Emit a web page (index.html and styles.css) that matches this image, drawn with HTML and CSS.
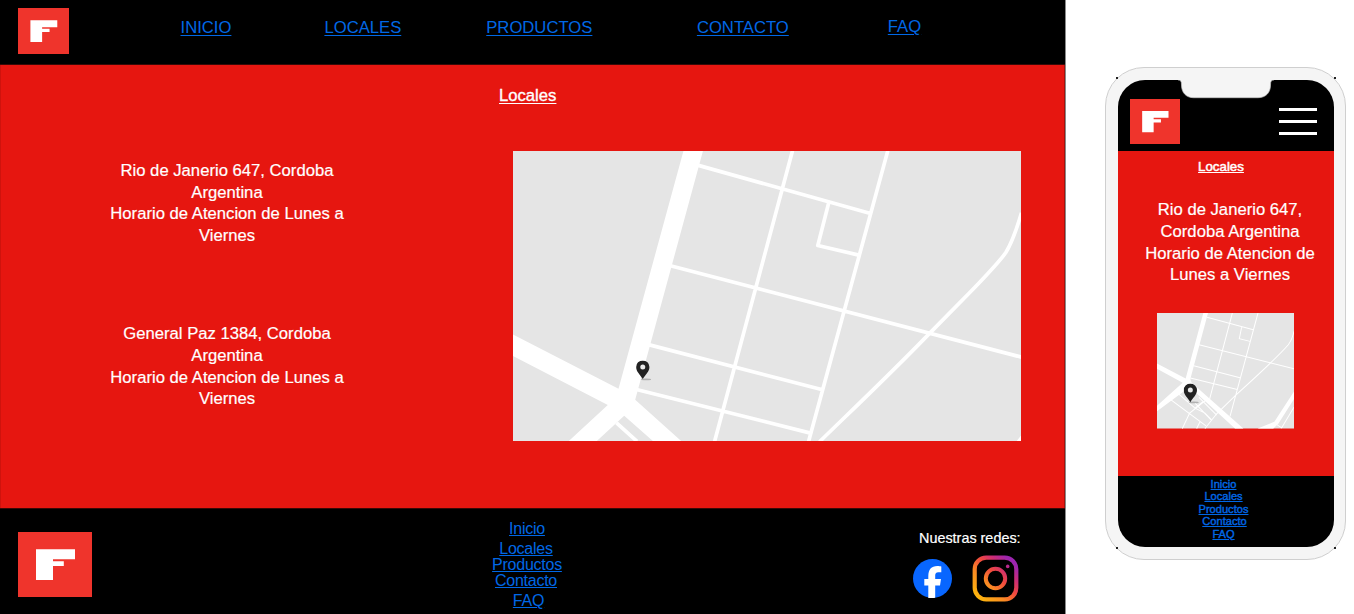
FILE: index.html
```html
<!DOCTYPE html>
<html lang="es">
<head>
<meta charset="utf-8">
<title>Locales</title>
<link rel="stylesheet" href="styles.css">
</head>
<body>
<svg class="defs" width="0" height="0" aria-hidden="true">
  <symbol id="logo" viewBox="0 0 74 65" preserveAspectRatio="none">
    <rect width="74" height="65" fill="#ef342c"/>
    <path fill="#fff" d="M18 17.3H57V27.2H35V29.2H45.8V34H35V48H18z"/>
  </symbol>
  <symbol id="pin" viewBox="0 0 48 60">
    <ellipse cx="30" cy="57" rx="15" ry="3" fill="#000" opacity=".22"/>
    <path fill="#222" d="M20 0A20 20 0 0 0 0 20C0 34 12 43 20 56C28 43 40 34 40 20A20 20 0 0 0 20 0z"/>
    <circle cx="20" cy="20" r="7.5" fill="#e9e9e9"/>
  </symbol>
</svg>
<div class="board">
  <div class="desktop">
    <header class="topbar">
      <svg class="logo-top"><use href="#logo"/></svg>
      <nav class="menu">
        <a href="#">INICIO</a>
        <a href="#">LOCALES</a>
        <a href="#">PRODUCTOS</a>
        <a href="#">CONTACTO</a>
        <a href="#" class="menu-faq">FAQ</a>
      </nav>
    </header>
    <main class="content">
      <h1 class="title">Locales</h1>
      <div class="columns">
        <div class="addresses">
          <p>Rio de Janerio 647, Cordoba<br>Argentina<br>Horario de Atencion de Lunes a<br>Viernes</p>
          <p>General Paz 1384, Cordoba<br>Argentina<br>Horario de Atencion de Lunes a<br>Viernes</p>
        </div>
        <svg class="map" viewBox="512.5 151.2 508.5 290">
          <rect x="512" y="151" width="510" height="291" fill="#e5e5e5"/>
          <path fill="#fff" d="M683 151H702.5L634.7 400L681 441.5H652.7L623.7 416L596 441.5H568L607.3 405.3L512 356V334.5L618 389zM1016 441.5L1021 435V441.5z"/>
          <g fill="none" stroke="#fff" stroke-width="3.7">
            <path d="M697 165.3L870 213.7M669 265.7L1022 357.6M648 344.8L822 390M635 389.5L810 433.3M792 151L714 442M887.3 151L808 442M616 423L636.5 441.5"/>
            <path d="M828.3 202.7L817.3 245.7L858.3 255.3" stroke-linejoin="round"/>
            <path d="M819 442C855 407 890 374 929.3 333.3L972 290Q999 262 1005.500 252.500Q1013 240 1021 213"/>
          </g>
          <use href="#pin" x="635.6" y="360.6" width="16" height="20"/>
        </svg>
      </div>
    </main>
    <footer class="bottom">
      <svg class="logo-bottom"><use href="#logo"/></svg>
      <nav class="links">
        <a href="#">Inicio</a>
        <a href="#" class="nudge-left">Locales</a>
        <a href="#">Productos</a>
        <a href="#" class="nudge-left">Contacto</a>
        <a href="#">FAQ</a>
      </nav>
      <div class="social">
        <span>Nuestras redes:</span>
        <div class="networks">
          <svg width="39" height="39" viewBox="0 0 39 39">
            <circle cx="19.5" cy="19.5" r="19.5" fill="#0866ff"/>
            <path fill="#fff" d="M15.300 39V26.500H11.300V20H15.300V17C15.300 10.500 18.300 7 24.300 7C26 7 27.500 7.200 28.300 7.500V13.200H25.300C22.900 13.200 22.200 14.400 22.200 16.800V20H28L27 26.500H22.200V38.800Q18.500 39.400 15.300 39z"/>
          </svg>
          <svg width="47" height="47" viewBox="0 0 47 47">
            <defs><linearGradient id="ig" x1="0" y1="47" x2="47" y2="0" gradientUnits="userSpaceOnUse">
              <stop offset=".1" stop-color="#fcb60c"/><stop offset=".35" stop-color="#fb8d22"/><stop offset=".55" stop-color="#f0483f"/><stop offset=".7" stop-color="#cb2c77"/><stop offset=".85" stop-color="#9c25b0"/>
            </linearGradient></defs>
            <rect x="2.700" y="2.700" width="41.600" height="41.600" rx="11.500" fill="none" stroke="url(#ig)" stroke-width="4.200"/>
            <circle cx="23.500" cy="23.500" r="9.700" fill="none" stroke="url(#ig)" stroke-width="4"/>
            <circle cx="35.700" cy="11.400" r="1.800" fill="url(#ig)"/>
          </svg>
        </div>
      </div>
    </footer>
  </div>

  <div class="phone">
    <i class="dot tl"></i><i class="dot tr"></i><i class="dot bl"></i><i class="dot br"></i>
    <div class="screen">
      <svg class="notch" width="96" height="19" viewBox="0 0 96 19"><path fill="#f5f5f5" stroke="#c8c8c8" stroke-width=".7" d="M0 0C3 0 3.500 1.500 3.500 5C3.500 13 8.500 17.700 15.500 17.700H80C87.500 17.700 92.500 13 92.500 5C92.500 1.500 93 0 96 0V-2H0z"/></svg>
      <header class="phone-top">
        <svg class="logo-phone"><use href="#logo"/></svg>
        <div class="burger"><i></i><i></i><i></i></div>
      </header>
      <main class="phone-main">
        <h2>Locales</h2>
        <p>Rio de Janerio 647,<br>Cordoba Argentina<br>Horario de Atencion de<br>Lunes a Viernes</p>
        <svg class="phone-map" viewBox="36 40 411 346" preserveAspectRatio="none">
          <rect x="36" y="40" width="411" height="346" fill="#e5e5e5"/>
          <path fill="#fff" d="M175 40H189L136 238L140 249L295 386H270L134 262L36 334V318L113 249L36 207V191L122 236zM447 275L388 366L338 386H385L400 372L447 298z"/>
          <g fill="none" stroke="#fff" stroke-width="3">
            <path d="M186 53L325 90M162 135L447 207M146 198L285 234M136 235L277 269M262 40L194 297M339 40L255 350M290 82L283 117L315 125M447 95Q442 119 430 135C400 169 320 243 270 288L215 342L180 386"/>
            <path d="M78 300L183 378M98 280L150 325L180 340L200 360M150 310L198 360M162 293L215 346M112 386L134 340L182 302M155 386L165 366M447 322L410 384L392 372M150 325L175 305"/>
          </g>
          <use href="#pin" x="116" y="251" width="48" height="60"/>
        </svg>
      </main>
      <nav class="phone-links">
        <a href="#">Inicio</a>
        <a href="#">Locales</a>
        <a href="#">Productos</a>
        <a href="#" class="phone-nudge">Contacto</a>
        <a href="#">FAQ</a>
      </nav>
    </div>
  </div>
</div>
</body>
</html>
```
FILE: styles.css
```css
* { box-sizing: border-box; }
body {
  margin: 0;
  background: #fff;
  font-family: "Liberation Sans", Arial, sans-serif;
  font-size: 16.67px;
  overflow: hidden;
}
.defs { position: absolute; }
svg { display: block; flex: none; }
a { color: #0068e6; text-decoration: underline; text-underline-offset: 2px; }
h1, h2, p { margin: 0; font-weight: normal; }

.board { display: flex; width: 1354px; height: 614px; }
.desktop { width: 1066px; height: 614px; display: flex; flex-direction: column; border-right: 1px solid #8a8a8a; }

.topbar { height: 65px; background: #000; border-bottom: 1px solid #3a0806; display: flex; align-items: flex-start; padding: 8px 0 0 18px; }
.logo-top { width: 51px; height: 46px; }
.menu { display: flex; line-height: 20px; padding-top: 10px; }
.menu a { margin-left: 93px; }
.menu a:nth-child(1) { margin-left: 111.5px; }
.menu a:nth-child(3) { margin-left: 85px; }
.menu a:nth-child(4) { margin-left: 104.500px; }
.menu .menu-faq { margin-left: 99px; margin-top: -1px; }

.content { height: 443px; background: #e61610; color: #fff; border-left: 1px solid #cf130d; border-right: 1px solid #a5110c; display: flex; flex-direction: column; }
.title { font-size: 16.67px; line-height: 22px; padding: 20px 0 0 498px; text-decoration: underline; text-underline-offset: 2px; -webkit-text-stroke: .35px #fff; }
.columns { display: flex; align-items: flex-start; padding: 44.200px 0 0 86px; }
.addresses { width: 280px; margin-right: 145.500px; padding-top: 8.700px; line-height: 21.670px; text-align: center; display: flex; flex-direction: column; gap: 76.600px; -webkit-text-stroke: .2px #fff; }
.map { width: 508.500px; height: 290px; }

.bottom { height: 106px; background: #000; border-top: 1px solid #3a0806; display: flex; align-items: flex-start; }
.logo-bottom { width: 74px; height: 65px; margin: 23px 0 0 18px; }
.links { width: 120px; margin-left: 375px; padding-top: 12px; display: flex; flex-direction: column; align-items: center; font-size: 16px; letter-spacing: -.25px; line-height: 16px; }
.links a { text-underline-offset: 1px; }
.links a:nth-child(1), .links a:nth-child(4) { margin-bottom: 4px; }
.links a:nth-child(5) { margin-left: 3px; }
.nudge-left { margin-right: 2px; }
.social { width: 120px; margin-left: 318px; padding-top: 20px; color: #fff; font-size: 14.400px; line-height: 18px; }
.social span { display: block; padding-left: 14px; white-space: nowrap; -webkit-text-stroke: .2px #fff; }
.networks { display: flex; align-items: center; gap: 20px; padding: 7.500px 0 0 8px; }

.phone { position: relative; width: 241px; height: 493px; margin: 67px 0 0 39px; padding: 12px; background: #f5f5f5; border: 1px solid #cfcfcf; border-radius: 39px; }
.dot { position: absolute; width: 2px; height: 2px; background: #222; }
.tl { left: 10px; top: 9px; }
.tr { right: 9px; top: 9px; }
.bl { left: 10px; bottom: 10px; }
.br { right: 9px; bottom: 10px; }
.screen { position: relative; width: 216px; height: 467px; border-radius: 27px; overflow: hidden; background: #000; }
.notch { position: absolute; left: 60px; top: 0; }
.phone-top { height: 71px; display: flex; justify-content: space-between; padding: 19px 17px 0 12px; }
.logo-phone { width: 50px; height: 45px; }
.burger { width: 38px; display: flex; flex-direction: column; gap: 9px; padding-top: 9px; }
.burger i { height: 3px; background: #fff; }
.phone-main { height: 325px; background: #e61610; color: #fff; display: flex; flex-direction: column; align-items: center; padding-top: 8px; }
.phone-main h2 { font-size: 13.300px; line-height: 16px; text-decoration: underline; padding-right: 10px; -webkit-text-stroke: .5px #fff; text-underline-offset: 1px; }
.phone-main p { line-height: 21.670px; text-align: center; white-space: nowrap; padding: 24.300px 0 0 8px; -webkit-text-stroke: .2px #fff; }
.phone-map { width: 137px; height: 115.500px; margin: 27.200px 1px 0 0; }
.phone-links { display: flex; flex-direction: column; align-items: center; padding: 1.700px 5px 0 0; font-size: 11.100px; line-height: 12.500px; -webkit-text-stroke: .4px #0068e6; }
.phone-links a { text-underline-offset: 1px; text-decoration-thickness: 1px; }
.phone-nudge { margin-left: 2px; }
```
